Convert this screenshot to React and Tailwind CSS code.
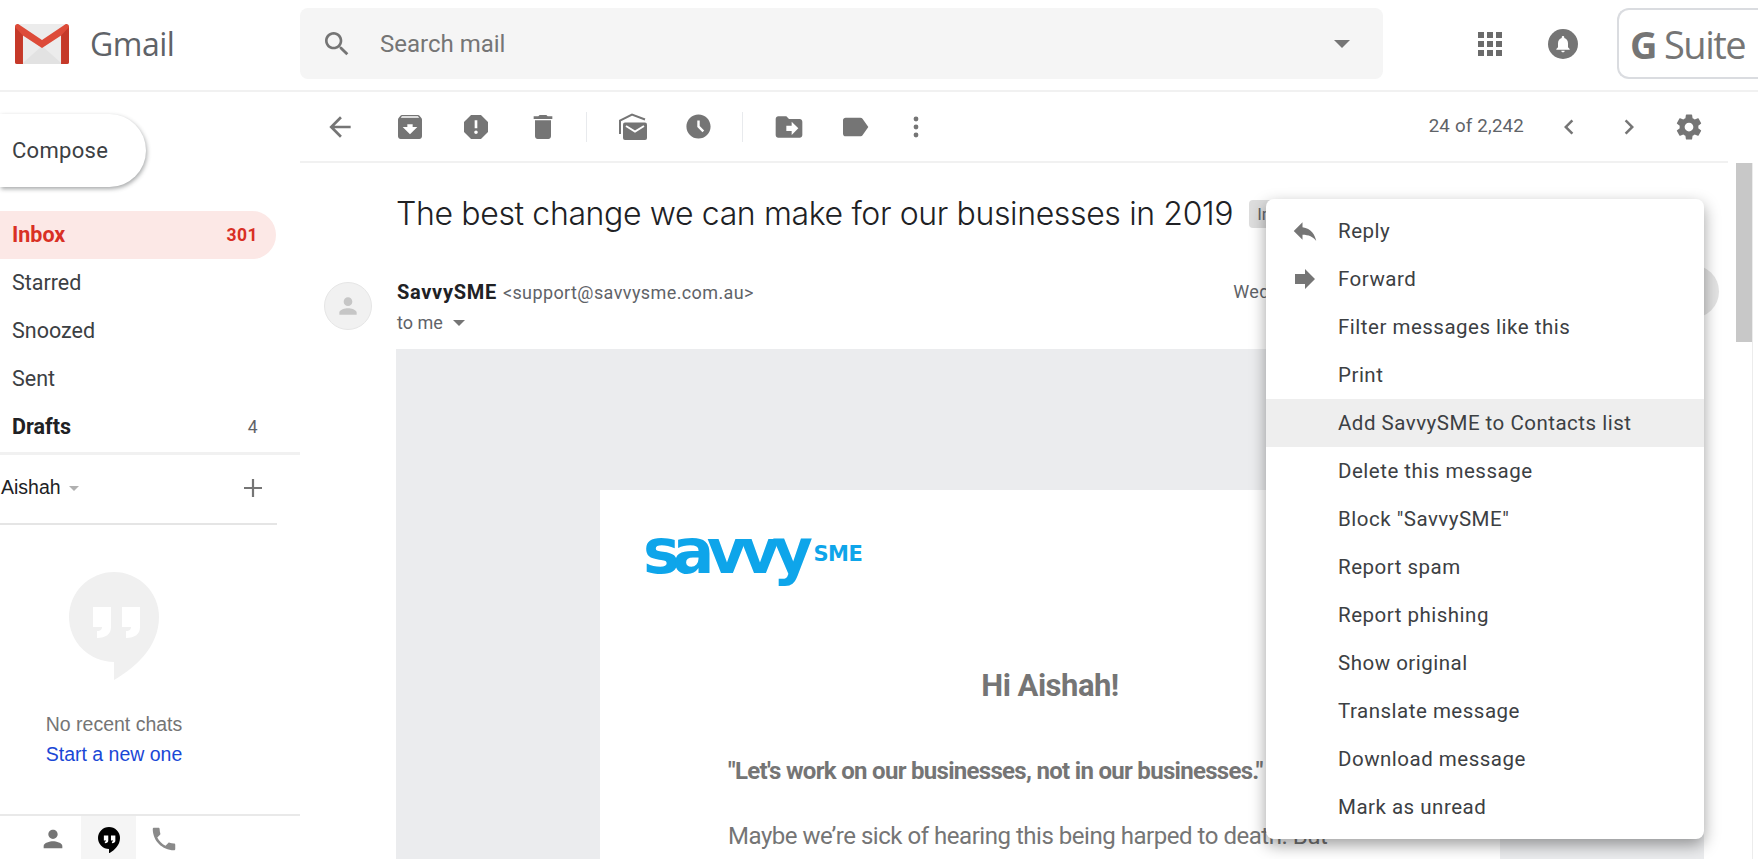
const P = {
  back: "M20 11H7.83l5.59-5.59L12 4l-8 8 8 8 1.41-1.41L7.83 13H20v-2z",
  archive: "M20.54 5.23l-1.39-1.68C18.88 3.21 18.47 3 18 3H6c-.47 0-.88.21-1.16.55L3.46 5.23C3.17 5.57 3 6.02 3 6.5V19c0 1.1.9 2 2 2h14c1.1 0 2-.9 2-2V6.5c0-.48-.17-.93-.46-1.27zM12 17.5L6.5 12H10v-2h4v2h3.5L12 17.5zM5.12 5l.81-1h12l.94 1H5.12z",
  report: "M15.73 3H8.27L3 8.27v7.46L8.27 21h7.46L21 15.73V8.27L15.73 3zM12 17.3c-.72 0-1.3-.58-1.3-1.3 0-.72.58-1.3 1.3-1.3.72 0 1.3.58 1.3 1.3 0 .72-.58 1.3-1.3 1.3zm1-4.3h-2V7h2v6z",
  trash: "M6 19c0 1.1.9 2 2 2h8c1.1 0 2-.9 2-2V7H6v12zM19 4h-3.5l-1-1h-5l-1 1H5v2h14V4z",
  clock: "M11.99 2C6.47 2 2 6.48 2 12s4.47 10 9.99 10C17.52 22 22 17.52 22 12S17.52 2 11.99 2zm3.3 14.71L11 12.41V7h2v4.59l3.71 3.71-1.42 1.41z",
  move: "M20 6h-8l-2-2H4c-1.1 0-1.99.9-1.99 2L2 18c0 1.1.9 2 2 2h16c1.1 0 2-.9 2-2V8c0-1.1-.9-2-2-2zm-6 12v-3h-4v-4h4V8l5 5-5 5z",
  label: "M17.63 5.84C17.27 5.33 16.67 5 16 5L5 5.01C3.9 5.01 3 5.9 3 7v10c0 1.1.9 1.99 2 1.99L16 19c.67 0 1.27-.33 1.63-.84L22 12l-4.37-6.16z",
  left: "M15.41 7.41L14 6l-6 6 6 6 1.41-1.41L10.83 12z",
  right: "M10 6L8.59 7.41 13.17 12l-4.58 4.59L10 18l6-6z",
  gear: "M19.43 12.98c.04-.32.07-.64.07-.98s-.03-.66-.07-.98l2.11-1.65c.19-.15.24-.42.12-.64l-2-3.46c-.12-.22-.39-.3-.61-.22l-2.49 1c-.52-.4-1.08-.73-1.69-.98l-.38-2.65C14.46 2.18 14.25 2 14 2h-4c-.25 0-.46.18-.49.42l-.38 2.65c-.61.25-1.17.59-1.69.98l-2.49-1c-.23-.09-.49 0-.61.22l-2 3.46c-.13.22-.07.49.12.64l2.11 1.65c-.04.32-.07.65-.07.98s.03.66.07.98l-2.11 1.65c-.19.15-.24.42-.12.64l2 3.46c.12.22.39.3.61.22l2.49-1c.52.4 1.08.73 1.69.98l.38 2.65c.03.24.24.42.49.42h4c.25 0 .46-.18.49-.42l.38-2.65c.61-.25 1.17-.59 1.69-.98l2.49 1c.23.09.49 0 .61-.22l2-3.46c.12-.22.07-.49-.12-.64l-2.11-1.65zM12 15.5c-1.93 0-3.5-1.57-3.5-3.5s1.57-3.5 3.5-3.5 3.5 1.57 3.5 3.5-1.57 3.5-3.5 3.5z",
  search: "M15.5 14h-.79l-.28-.27C15.41 12.59 16 11.11 16 9.5 16 5.91 13.09 3 9.5 3S3 5.91 3 9.5 5.91 16 9.5 16c1.61 0 3.09-.59 4.23-1.57l.27.28v.79l5 4.99L20.49 19l-4.99-5zm-6 0C7.01 14 5 11.99 5 9.5S7.01 5 9.5 5 14 7.01 14 9.5 11.99 14 9.5 14z",
  reply: "M10 9V5l-7 7 7 7v-4.1c5 0 8.5 1.6 11 5.1-1-5-4-10-11-11z",
  forward: "M12 8V4l8 8-8 8v-4H4V8z",
  person: "M12 12c2.21 0 4-1.79 4-4s-1.79-4-4-4-4 1.79-4 4 1.79 4 4 4zm0 2c-2.67 0-8 1.34-8 4v2h16v-2c0-2.66-5.33-4-8-4z",
  phone: "M6.62 10.79c1.44 2.83 3.76 5.14 6.59 6.59l2.2-2.2c.27-.27.67-.36 1.02-.24 1.12.37 2.33.57 3.57.57.55 0 1 .45 1 1V20c0 .55-.45 1-1 1-9.39 0-17-7.61-17-17 0-.55.45-1 1-1h3.5c.55 0 1 .45 1 1 0 1.25.2 2.45.57 3.57.11.35.03.74-.25 1.02l-2.2 2.2z",
};

function Icon({ d, size = 32, className = "text-[#757575]" }) {
  return (
    <svg width={size} height={size} viewBox="0 0 24 24" fill="currentColor" className={"shrink-0 " + className}>
      <path d={d} />
    </svg>
  );
}

function Caret({ className = "w-0 h-0 border-x-[7px] border-x-transparent border-t-[7px] border-t-[#757575]" }) {
  return <span className={"inline-block " + className} />;
}

function GmailLogo() {
  return (
    <svg width="54" height="40" viewBox="0 0 48 40" preserveAspectRatio="none" className="shrink-0">
      <path d="M2 0h44a2 2 0 0 1 2 2v36a2 2 0 0 1-2 2H2a2 2 0 0 1-2-2V2a2 2 0 0 1 2-2z" fill="#ececec" />
      <path d="M6 40L24 22l18 18z" fill="#e2e2e2" />
      <path d="M0 2.500C0 .5 2-.6 3.500.5L24 16 44.500.5C46-.6 48 .5 48 2.500V38a2 2 0 0 1-2 2h-5V11.500L24 24 7 11.500V40H2a2 2 0 0 1-2-2z" fill="#dd4b39" />
      <path d="M0 3l7 8.500V40H2a2 2 0 0 1-2-2zM48 3l-7 8.500V40h5a2 2 0 0 0 2-2z" fill="#c53929" />
    </svg>
  );
}

function HangoutsIcon({ size, bubble, quote }) {
  return (
    <svg width={size} height={(size * 108) / 90} viewBox="0 0 90 108" className="shrink-0">
      <path d="M45 0a45 45 0 0 1 45 45c0 30-24 51-45 63V90a45 45 0 0 1 0-90z" fill={bubble} />
      <path d="M24 35h18v20c0 7-5 11-14 11v-7c4 0 5-2 5-4h-9zM53 35h18v20c0 7-5 11-14 11v-7c4 0 5-2 5-4h-9z" fill={quote} />
    </svg>
  );
}

function Header() {
  return (
    <header className="h-[90px] shrink-0 flex border-b-2 border-[#f1f1f1] box-content -mb-0.5">
      <div className="w-[300px] shrink-0 flex items-center pl-[15px] pb-0.5">
        <GmailLogo />
        <span className="ml-[21px] text-[32px] text-[#5f6368] tracking-[-0.5px] font-['Open_Sans',sans-serif]">Gmail</span>
      </div>
      <div className="w-[1083px] h-[71px] mt-2 shrink-0 bg-[#f5f5f5] rounded-lg flex items-center pl-[21px] pr-[33px]">
        <Icon d={P.search} size={32} />
        <span className="ml-[27px] text-[24px] text-[#757575] font-['Roboto',sans-serif] flex-1">Search mail</span>
        <Caret className="w-0 h-0 border-x-[8px] border-x-transparent border-t-[8px] border-t-[#757575]" />
      </div>
      <div className="flex items-center pb-0.5">
        <div className="ml-[95px] grid grid-cols-3 gap-[3px] w-[24px]">
          {Array.from({ length: 9 }).map((_, i) => (
            <span key={i} className="w-[6px] h-[6px] bg-[#6b6b6b]" />
          ))}
        </div>
        <div className="ml-[46px] w-[30px] h-[30px] rounded-full bg-[#757575] flex items-center justify-center">
          <svg width="20" height="20" viewBox="0 0 24 24" fill="#fff">
            <path d="M12 22c1.100 0 2-.9 2-2h-4c0 1.100.9 2 2 2zm6-6v-5c0-3.100-1.600-5.600-4.500-6.300V4c0-.8-.7-1.500-1.500-1.500s-1.500.7-1.500 1.500v.7C7.600 5.400 6 7.900 6 11v5l-2 2v1h16v-1z" />
          </svg>
        </div>
      </div>
      <div className="ml-[39px] mt-2 w-[200px] h-[71px] shrink-0 border-2 border-r-0 border-[#dadce0] rounded-l-xl flex items-center pl-[11px] text-[#757575] font-['Open_Sans',sans-serif] text-[38px] leading-none tracking-[-1.5px]">
        <span className="font-bold">G</span>
        <span className="ml-2">Suite</span>
      </div>
    </header>
  );
}

const NAV = [
  { label: "Inbox", count: "301", active: true },
  { label: "Starred" },
  { label: "Snoozed" },
  { label: "Sent" },
  { label: "Drafts", count: "4", bold: true },
];

function Sidebar() {
  return (
    <aside className="w-[300px] shrink-0 flex flex-col overflow-hidden font-['Roboto',sans-serif]">
      <div className="mt-6 w-[146px] h-[73px] shrink-0 bg-white rounded-r-full shadow-[1px_2px_4px_rgba(60,64,67,0.45)] flex items-center pl-3 text-[22px] text-[#3c4043] tracking-[0.3px]">
        Compose
      </div>
      <nav className="mt-6 w-[276px] shrink-0">
        {NAV.map((n) => (
          <div
            key={n.label}
            className={
              "h-12 flex items-center justify-between pl-3 pr-[18px] text-[21.5px] rounded-r-full " +
              (n.active ? "bg-[#fce8e6] text-[#d93025] font-bold" : n.bold ? "text-[#202124] font-bold" : "text-[#3c4043]")
            }
          >
            <span>{n.label}</span>
            {n.count && (
              <span className={"text-[17.5px] tracking-[0.5px] " + (n.active ? "" : "font-normal text-[#5f6368]")}>{n.count}</span>
            )}
          </div>
        ))}
      </nav>
      <div className="mt-px h-[3px] shrink-0 bg-[#f1f1f1]" />
      <div className="w-[277px] h-[70px] shrink-0 border-b-2 border-[#e5e5e5] flex items-center pb-[3px] pl-px pr-[12px] font-['Liberation_Sans',sans-serif] text-[19.5px] text-[#202124]">
        <span>Aishah</span>
        <Caret className="ml-2 mt-0.5 w-0 h-0 border-x-[5px] border-x-transparent border-t-[5px] border-t-[#b0b0b0]" />
        <svg width="24" height="24" viewBox="0 0 24 24" className="ml-auto">
          <path d="M12 3v18M3 12h18" stroke="#757575" strokeWidth="2.200" />
        </svg>
      </div>
      <div className="w-[228px] flex flex-col items-center shrink-0">
        <div className="mt-[47px]">
          <HangoutsIcon size={90} bubble="#f0f0f0" quote="#ffffff" />
        </div>
        <p className="mt-[29px] text-[19.5px] leading-[30px] text-[#757575] font-['Liberation_Sans',sans-serif]">No recent chats</p>
        <p className="text-[19.5px] leading-[30px] text-[#1a47d6] font-['Liberation_Sans',sans-serif]">Start a new one</p>
      </div>
      <div className="mt-auto h-[45px] shrink-0 border-t-2 border-[#e9e9e9] flex pl-[25px]">
        <div className="w-14 flex items-center justify-center pt-[3px]">
          <Icon d={P.person} size={28} />
        </div>
        <div className="w-[55px] bg-[#f5f5f5] flex items-center justify-center pt-[5px]">
          <HangoutsIcon size={22} bubble="#000000" quote="#ffffff" />
        </div>
        <div className="w-14 flex items-center justify-center pt-[3px]">
          <Icon d={P.phone} size={30} className="text-[#8a8a8a]" />
        </div>
      </div>
    </aside>
  );
}

function UnreadIcon() {
  return (
    <svg width="32" height="32" viewBox="0 0 32 32" className="shrink-0">
      <path d="M3 23V9.500L15 3.500l13 5" fill="none" stroke="#757575" strokeWidth="2" />
      <path d="M8 11.500h20a2 2 0 0 1 2 2V27a2 2 0 0 1-2 2H8a2 2 0 0 1-2-2V13.500a2 2 0 0 1 2-2z" fill="#757575" />
      <path d="M9 15l9 5.500 9-5.500" fill="none" stroke="#fff" strokeWidth="2" />
    </svg>
  );
}

function Toolbar() {
  return (
    <div className="h-[73px] shrink-0 border-b-2 border-[#f1f1f1] w-[1428px] flex items-center pt-0.5 pl-6 font-['Roboto',sans-serif]">
      <Icon d={P.back} size={32} />
      <div className="ml-[38px]"><Icon d={P.archive} /></div>
      <div className="ml-[34px]"><Icon d={P.report} /></div>
      <div className="ml-[35px]"><Icon d={P.trash} /></div>
      <span className="ml-[27px] w-px h-[30px] bg-[#e8eaed]" />
      <div className="ml-[30px]"><UnreadIcon /></div>
      <div className="ml-[35px]"><Icon d={P.clock} size={29} /></div>
      <span className="ml-[29px] w-px h-[30px] bg-[#e8eaed]" />
      <div className="ml-[30px]"><Icon d={P.move} /></div>
      <div className="ml-[34px]"><Icon d={P.label} /></div>
      <svg width="6" height="24" viewBox="0 0 6 24" className="ml-[42px]" fill="#757575">
        <circle cx="3" cy="4" r="2.400" />
        <circle cx="3" cy="12" r="2.400" />
        <circle cx="3" cy="20" r="2.400" />
      </svg>
      <span className="ml-auto text-[18.7px] text-[#5f6368] tracking-[0.2px]">24 of 2,242</span>
      <div className="ml-[30px]"><Icon d={P.left} size={30} /></div>
      <div className="ml-[30px]"><Icon d={P.right} size={30} /></div>
      <div className="ml-[30px] mr-[24px]"><Icon d={P.gear} size={30} /></div>
    </div>
  );
}

function EmailBody() {
  return (
    <div className="flex-1 mt-[18px] ml-24 mr-8 pt-[141px] px-[204px] bg-[#ebecee] overflow-hidden">
      <div className="h-[400px] bg-white font-['Roboto',sans-serif] text-[#757575]">
        <div className="pt-[30px] pl-[43px] h-[100px] flex items-start text-[#0ea5ea] font-['DejaVu_Sans',sans-serif] font-bold">
          <span className="text-[62px] leading-[64px] tracking-[-7.5px]">savvy</span>
          <span className="ml-[8px] mt-[24px] text-[21px] leading-5 tracking-[-0.5px]">SME</span>
        </div>
        <h2 className="mt-[76px] text-center text-[31px] leading-[40px] font-bold tracking-[-0.5px]">Hi Aishah!</h2>
        <p className="mt-[49px] ml-[128px] text-[24px] leading-8 font-bold tracking-[-0.7px] whitespace-nowrap">"Let's work on our businesses, not in our businesses."</p>
        <p className="mt-[33px] ml-[128px] text-[24px] leading-8 tracking-[-0.47px] whitespace-nowrap">Maybe we’re sick of hearing this being harped to death. But</p>
      </div>
    </div>
  );
}

function Main() {
  return (
    <main className="flex-1 flex flex-col min-w-0">
      <Toolbar />
      <div className="pl-[96px] flex items-center whitespace-nowrap h-[102px] shrink-0">
        <h1 className="text-[32px] leading-[40px] text-[#202124] font-['Inter',sans-serif] font-light tracking-[-0.36px]">The best change we can make for our businesses in 2019</h1>
        <span className="ml-4 h-7 px-2 rounded bg-[#dddddd] text-[#5f6368] text-[17px] leading-7 font-['Roboto',sans-serif]">Inbox</span>
      </div>
      <div className="flex pl-6 pr-[17px] font-['Roboto',sans-serif] h-[49px] shrink-0 mt-[17px]">
        <div className="w-12 h-12 rounded-full bg-[#f1f1f1] border border-[#e6e6e6] flex items-center justify-center">
          <Icon d={P.person} size={26} className="text-[#c6c6c6]" />
        </div>
        <div className="ml-[25px] -mt-0.5">
          <div className="flex items-baseline leading-[24px]">
            <span className="text-[20px] font-bold text-[#202124] tracking-[0.7px]">SavvySME</span>
            <span className="ml-[6px] text-[18px] text-[#5f6368] tracking-[0.4px]">&lt;support@savvysme.com.au&gt;</span>
          </div>
          <div className="mt-[6px] flex items-center text-[18px] text-[#5f6368] leading-6">
            to me
            <Caret className="ml-[10px] w-0 h-0 border-x-[6px] border-x-transparent border-t-[6px] border-t-[#757575]" />
          </div>
        </div>
        <span className="ml-auto mr-[342px] -mt-0.5 text-[18px] leading-6 text-[#5f6368] tracking-[0.3px]">Wed, Jan 2</span>
        <span className="w-[53px] h-[53px] rounded-full bg-[#e3e3e3] -mt-[17px]" />
      </div>
      <EmailBody />
    </main>
  );
}

const MENU = [
  { label: "Reply", icon: P.reply },
  { label: "Forward", icon: P.forward },
  { label: "Filter messages like this" },
  { label: "Print" },
  { label: "Add SavvySME to Contacts list", active: true },
  { label: "Delete this message" },
  { label: 'Block "SavvySME"' },
  { label: "Report spam" },
  { label: "Report phishing" },
  { label: "Show original" },
  { label: "Translate message" },
  { label: "Download message" },
  { label: "Mark as unread" },
];

function MessageMenu() {
  return (
    <div className="absolute left-[1266px] top-[199px] w-[438px] py-2 bg-white rounded-lg shadow-[0_6px_16px_rgba(0,0,0,0.38)] font-['Roboto',sans-serif] text-[20.5px] text-[#3c4043] tracking-[0.5px] z-10">
      {MENU.map((m) => (
        <div key={m.label} className={"h-12 flex items-center " + (m.active ? "bg-[#eeeeee]" : "")}>
          <div className="w-[72px] pl-[24px] shrink-0">
            {m.icon && <Icon d={m.icon} size={30} />}
          </div>
          <span className="whitespace-nowrap">{m.label}</span>
        </div>
      ))}
    </div>
  );
}

export default function App() {
  return (
    <div className="relative h-screen w-full overflow-hidden bg-white flex flex-col">
      <Header />
      <div className="flex-1 flex min-h-0">
        <Sidebar />
        <Main />
        <div className="w-[22px] shrink-0">
          <div className="w-[17px] h-full border-r border-[#ececec]">
            <div className="mt-[73px] h-[179px] bg-[#c8c8c8]" />
          </div>
        </div>
      </div>
      <MessageMenu />
    </div>
  );
}
